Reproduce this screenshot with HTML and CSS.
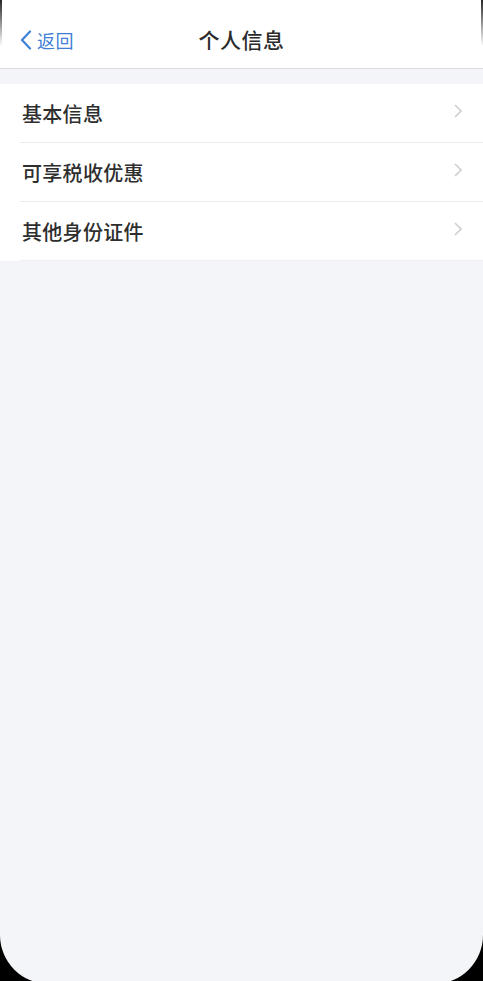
FILE: index.html
```html
<!DOCTYPE html>
<html lang="zh">
<head>
<meta charset="utf-8">
<link rel="stylesheet" href="styles.css">
</head>
<body>
<div class="screen">
  <header class="nav">
    <a class="back">
      <svg class="back-icon" width="12" height="20" viewBox="0 0 12 20"><path d="M10 1.5 L2 10 L10 18.5" fill="none" stroke="#3f7fd6" stroke-width="2.2" stroke-linecap="round" stroke-linejoin="round"/></svg>
      <span>返回</span>
    </a>
    <h1 class="title">个人信息</h1>
  </header>
  <ul class="list">
    <li class="row"><span class="label">基本信息</span><svg class="chev" width="8" height="14" viewBox="0 0 8 14"><path d="M1 1 L7 7 L1 13" fill="none" stroke="#cfcfd2" stroke-width="1.6"/></svg></li>
    <li class="row"><span class="label">可享税收优惠</span><svg class="chev" width="8" height="14" viewBox="0 0 8 14"><path d="M1 1 L7 7 L1 13" fill="none" stroke="#cfcfd2" stroke-width="1.6"/></svg></li>
    <li class="row"><span class="label">其他身份证件</span><svg class="chev" width="8" height="14" viewBox="0 0 8 14"><path d="M1 1 L7 7 L1 13" fill="none" stroke="#cfcfd2" stroke-width="1.6"/></svg></li>
  </ul>
  <div class="edge edge-left"></div>
  <div class="edge edge-right"></div>
</div>
</body>
</html>
```
FILE: styles.css
```css
html, body {
  margin: 0;
  padding: 0;
  background: #000;
  overflow: hidden;
  height: 981px;
}
body {
  font-family: "Noto Sans CJK SC", "Noto Sans", sans-serif;
}
.screen {
  position: relative;
  width: 483px;
  height: 984px;
  background: #f4f5f9;
  border-radius: 0 0 49px 49px;
  overflow: hidden;
}
.nav {
  height: 68px;
  background: #fff;
  border-bottom: 1px solid #dcdcdf;
  display: flex;
  align-items: center;
  justify-content: center;
  position: relative;
}
.back {
  position: absolute;
  left: 20px;
  top: 29px;
  display: flex;
  align-items: center;
  gap: 5px;
  color: #3f7fd6;
  font-size: 18px;
  line-height: 22px;
  letter-spacing: 0.5px;
}
.back-icon { display: block; }
.title {
  margin: 0;
  font-size: 21px;
  font-weight: 500;
  color: #2b2b2b;
  padding-top: 9px;
  letter-spacing: 0.5px;
}
.list {
  list-style: none;
  margin: 15px 0 0;
  padding: 0 0 0 20px;
  background: #fff;
}
.row {
  height: 58px;
  display: flex;
  align-items: center;
  justify-content: space-between;
  padding: 0 21px 0 2px;
  border-bottom: 1px solid #ebebee;
}
.row:last-child { border-bottom-color: #f0f0f2; }
.label {
  font-size: 20px;
  font-weight: 500;
  color: #2e2e2e;
  letter-spacing: 0.3px;
}
.chev { display: block; margin-top: -4px; }
.edge {
  position: absolute;
  top: 0;
  width: 2px;
  height: 46px;
}
.edge-left {
  left: 0;
  background: linear-gradient(to bottom, rgba(0,0,0,0.85), rgba(0,0,0,0));
}
.edge-right {
  right: 0;
  background: linear-gradient(to bottom, rgba(0,0,0,0.85), rgba(0,0,0,0));
}
```
